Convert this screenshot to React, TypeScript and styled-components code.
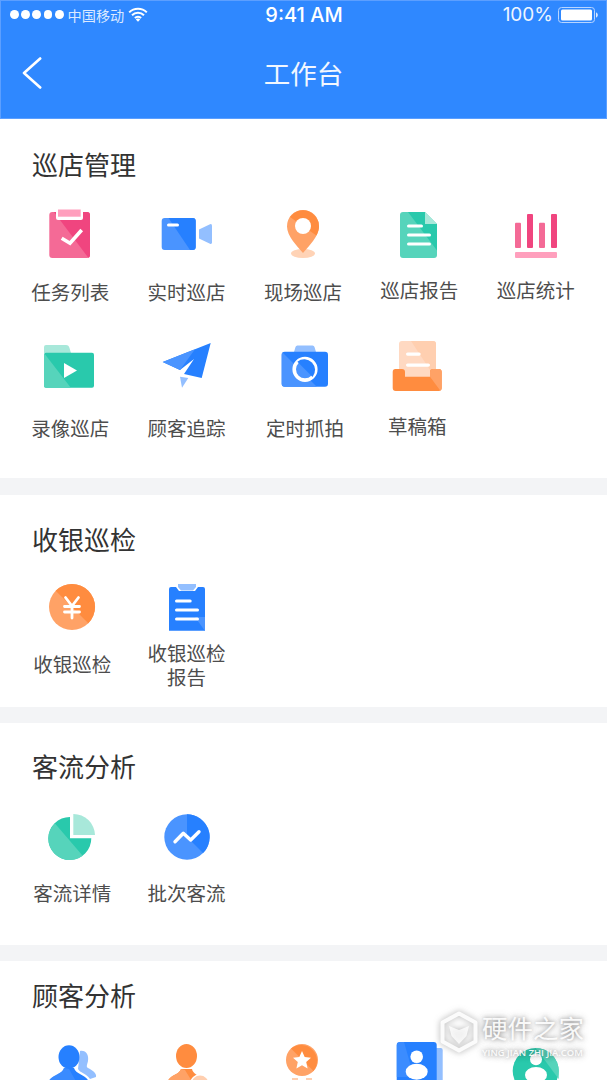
import React from "react";
import styled, { createGlobalStyle } from "styled-components";

const pink = { dark: "#f0457f", mid: "#f46a96", soft: "#ff9fbd" };
const blue = { dark: "#2680ff", mid: "#4a94ff", soft: "#93bfff" };
const green = { dark: "#29c9ac", mid: "#56d4bb", soft: "#a8e8da" };
const orange = { dark: "#ff8c3f", mid: "#ffa266", soft: "#ffcfb0" };

const GlobalStyle = createGlobalStyle`
  html, body {
    margin: 0;
    padding: 0;
    background: #f3f4f6;
  }
  body {
    font-family: "Noto Sans CJK SC", "Noto Sans", sans-serif;
  }
`;

const Screen = styled.div`
  position: relative;
  width: 607px;
  height: 1080px;
  overflow: hidden;
  display: flex;
  flex-direction: column;
  background: #f3f4f6;
`;

const Header = styled.header`
  flex: none;
  height: 119px;
  background: #2f88ff;
  box-shadow: inset 0 0 0 1px #5c9fff;
  color: #fff;
`;

const StatusBar = styled.div`
  height: 29px;
  padding: 0 9px 0 10px;
  display: grid;
  grid-template-columns: 1fr auto 1fr;
  align-items: center;
`;

const StatusLeft = styled.div`
  display: flex;
  align-items: center;
`;

const Dots = styled.div`
  display: flex;
  gap: 2.4px;
  margin-right: 4px;
`;

const Dot = styled.span`
  width: 8.8px;
  height: 8.8px;
  border-radius: 50%;
  background: #fff;
`;

const Carrier = styled.span`
  font-size: 14.2px;
  line-height: 18px;
  color: #dbe9ff;
  margin-right: 4px;
`;

const Clock = styled.span`
  font-family: Inter, "Liberation Sans", sans-serif;
  font-size: 20px;
  font-weight: 500;
  line-height: 24px;
`;

const StatusRight = styled.div`
  display: flex;
  justify-content: flex-end;
  align-items: center;
  gap: 5px;
`;

const Percent = styled.span`
  font-family: Inter, "Liberation Sans", sans-serif;
  font-size: 19px;
  line-height: 24px;
  color: #eef5ff;
`;

const NavBar = styled.div`
  height: 88px;
  padding-bottom: 2px;
  display: grid;
  grid-template-columns: 1fr auto 1fr;
  align-items: center;
`;

const BackButton = styled.div`
  display: flex;
  padding-left: 22px;
`;

const PageTitle = styled.h1`
  margin: 0;
  font-size: 26.5px;
  font-weight: 400;
  line-height: 36px;
  color: #f2f7ff;
`;

const Panels = styled.main`
  display: flex;
  flex-direction: column;
  gap: 16px;
`;

const Panel = styled.section<{ $top: number; $gap: number; $bottom: number }>`
  background: #fff;
  padding: ${(p) => p.$top}px 0 ${(p) => p.$bottom}px;

  &:first-child {
    margin-bottom: 1px;
  }

  h2 {
    margin: 0 0 ${(p) => p.$gap}px 32px;
    font-size: 26px;
    font-weight: 400;
    line-height: 36px;
    color: #333;
  }
`;

const Grid = styled.div<{ $row: number }>`
  padding-left: 12px;
  display: grid;
  grid-template-columns: repeat(5, 116.4px);
  grid-auto-rows: ${(p) => p.$row}px;
`;

const Item = styled.div<{ $dx: number }>`
  display: flex;
  flex-direction: column;
  align-items: center;
  margin-left: ${(p) => p.$dx}px;
  margin-right: ${(p) => -p.$dx}px;
`;

const Glyph = styled.svg`
  flex: none;
  display: block;
  width: 60px;
  height: 60px;
`;

const Label = styled.div<{ $drop: number }>`
  margin-top: ${(p) => p.$drop}px;
  max-width: 80px;
  text-align: center;
  font-size: 19.5px;
  line-height: 24px;
  color: #4d4d4d;
`;

const Watermark = styled.div`
  position: absolute;
  left: 440px;
  top: 1011px;
  display: flex;
  gap: 4px;
  color: rgba(255, 255, 255, 0.92);
  text-shadow: 0 0 4px rgba(70, 70, 70, 0.55), 0 0 8px rgba(70, 70, 70, 0.3);
  pointer-events: none;

  svg {
    filter: drop-shadow(0 0 3px rgba(70, 70, 70, 0.5));
  }
`;

const MarkText = styled.div`
  display: flex;
  flex-direction: column;
`;

const MarkName = styled.div`
  font-size: 25.5px;
  line-height: 30px;
  margin-top: 1px;
`;

const MarkSub = styled.div`
  font-family: "Open Sans", "Liberation Sans", sans-serif;
  font-size: 9.4px;
  font-weight: 600;
  line-height: 14px;
  margin-top: 4px;
  white-space: nowrap;
`;

const Wifi = () => (
  <svg width="20" height="15" viewBox="0 0 20 15">
    <path d="M1.200 5.400a12.500 12.500 0 0 1 17.600 0M4 8.300a8.500 8.500 0 0 1 12 0M6.900 11a4.300 4.300 0 0 1 6.200 0" fill="none" stroke="#fff" strokeWidth="2" />
    <path d="M10 14.800 7.800 12.500a3.200 3.200 0 0 1 4.400 0z" fill="#fff" />
  </svg>
);

const Battery = () => (
  <svg width="40" height="16" viewBox="0 0 40 16">
    <rect x="0.500" y="0.500" width="36" height="15" rx="3" fill="none" stroke="#b9d5ff" />
    <rect x="3" y="2.500" width="31" height="11" rx="1.500" fill="#fff" />
    <path d="M38 5.500c1.200.3 1.800 1.300 1.800 2.500s-.6 2.200-1.800 2.500z" fill="#dbe9ff" />
  </svg>
);

const BackIcon = () => (
  <svg width="20" height="34" viewBox="0 0 20 34">
    <path d="M18.200 2.500 2 17l16.200 14.500" fill="none" stroke="#fff" strokeWidth="2.600" strokeLinecap="round" strokeLinejoin="round" />
  </svg>
);

const TaskIcon = () => (
  <Glyph viewBox="0 0 60 60">
    <clipPath id="task">
      <rect x="9.300" y="7" width="40.700" height="46" rx="3" />
    </clipPath>
    <g clipPath="url(#task)">
      <rect x="9" y="7" width="41" height="46" fill={pink.mid} />
      <polygon points="14,7 50,7 50,53 48.500,53" fill={pink.dark} />
    </g>
    <rect x="16" y="3" width="27" height="12" rx="2" fill="#fff" />
    <rect x="18" y="4.500" width="22.700" height="7.200" fill={pink.soft} />
    <path d="M21.700 33.300 30 38.300 41.700 25" fill="none" stroke="#fff" strokeWidth="3.600" />
  </Glyph>
);

const VideoIcon = () => (
  <Glyph viewBox="0 0 60 60">
    <clipPath id="video">
      <rect x="4.700" y="13" width="34" height="32" rx="3" />
    </clipPath>
    <g clipPath="url(#video)">
      <rect x="4" y="13" width="35" height="32" fill={blue.mid} />
      <polygon points="11.500,13 39,13 39,45 33,45" fill={blue.dark} />
    </g>
    <rect x="10" y="18.500" width="12" height="3" rx="1.500" fill="#fff" />
    <path d="M42 24.500 53 19.300a1.500 1.500 0 0 1 2 1.400v16.600a1.500 1.500 0 0 1-2 1.400L42 33.500z" fill={blue.soft} />
  </Glyph>
);

const PinIcon = () => (
  <Glyph viewBox="0 0 60 60">
    <ellipse cx="30" cy="48.500" rx="12" ry="4.500" fill="#ffd3b6" />
    <path d="M30 5a16 16 0 0 1 16 16.500C46 31 36 41 30 48 24 41 14 31 14 21.500A16 16 0 0 1 30 5z" fill={orange.mid} />
    <path d="M17 12A16 16 0 0 1 46 21.500C46 24.500 45 27.500 43.400 30.600z" fill={orange.dark} />
    <circle cx="30" cy="21" r="8" fill="#fff" />
  </Glyph>
);

const ReportIcon = () => (
  <Glyph viewBox="0 0 60 60">
    <path d="M14 7h22l12 12v31a3 3 0 0 1-3 3H14a3 3 0 0 1-3-3V10a3 3 0 0 1 3-3z" fill={green.mid} />
    <path d="M19 7h17v12h12v26.500z" fill={green.dark} />
    <path d="M36 7l12 12H36z" fill={green.soft} />
    <rect x="18" y="19.500" width="16" height="3" rx="1.500" fill="#fff" />
    <rect x="18" y="28.500" width="24" height="3" rx="1.500" fill="#fff" />
    <rect x="18" y="37.500" width="24" height="3" rx="1.500" fill="#fff" />
  </Glyph>
);

const StatsIcon = () => (
  <Glyph viewBox="0 0 60 60">
    <rect x="9" y="17.700" width="6" height="25.300" rx="1" fill={pink.mid} />
    <rect x="21" y="9" width="6" height="34" rx="1" fill={pink.dark} />
    <rect x="33" y="17.700" width="6" height="25.300" rx="1" fill={pink.mid} />
    <rect x="45" y="9" width="6" height="34" rx="1" fill={pink.dark} />
    <rect x="9" y="47" width="42" height="6" rx="1" fill={pink.soft} />
  </Glyph>
);

const RecordIcon = () => (
  <Glyph viewBox="0 0 60 60">
    <path d="M6 8h20c2 0 3 1 3.500 3l1.500 5H4v-6a2 2 0 0 1 2-2z" fill={green.soft} />
    <clipPath id="record">
      <rect x="4" y="15.700" width="50" height="35" rx="2" />
    </clipPath>
    <g clipPath="url(#record)">
      <rect x="4" y="15" width="50" height="36" fill={green.dark} />
      <polygon points="4,16 4,51 31,51" fill={green.mid} />
    </g>
    <polygon points="24,26 37,33.500 24,41" fill="#fff" />
  </Glyph>
);

const PlaneIcon = () => (
  <Glyph viewBox="0 0 60 60">
    <polygon points="53.700,6 5.700,25 23,33 37,22 27,37 44.700,41" fill={blue.dark} />
    <polygon points="5.700,25 38,12.300 23,33" fill={blue.mid} />
    <polygon points="23,39.700 31.300,41 25,50.700" fill={blue.soft} />
  </Glyph>
);

const CameraIcon = () => (
  <Glyph viewBox="0 0 60 60">
    <path d="M19 15l1.500-5a2 2 0 0 1 2-1.500h15a2 2 0 0 1 2 1.500l1.500 5z" fill={blue.soft} />
    <clipPath id="camera">
      <rect x="6.700" y="14.700" width="46.300" height="35" rx="3" />
    </clipPath>
    <g clipPath="url(#camera)">
      <rect x="6" y="14" width="48" height="36" fill={blue.dark} />
      <polygon points="6,14 6,50 42,50" fill={blue.mid} />
    </g>
    <circle cx="30" cy="32.300" r="10.800" fill={blue.mid} stroke="#fff" strokeWidth="3.600" />
    <path d="M22.400 24.700A10.800 10.800 0 0 1 37.600 39.900z" fill={blue.dark} />
  </Glyph>
);

const DraftIcon = () => (
  <Glyph viewBox="0 0 60 60">
    <rect x="12" y="4" width="37" height="38" rx="3" fill="#ffd9c2" />
    <path d="M24 4h22a3 3 0 0 1 3 3v35z" fill={orange.soft} />
    <rect x="19" y="15.500" width="14.700" height="3.200" rx="1.600" fill="#fff" />
    <rect x="19" y="26.500" width="24" height="3.200" rx="1.600" fill="#fff" />
    <path d="M9 32h6a3 3 0 0 1 3 3v4.700h25V35a3 3 0 0 1 3-3h5.700a3 3 0 0 1 3 3v16a3 3 0 0 1-3 3H8.700a3 3 0 0 1-3-3V35a3 3 0 0 1 3.300-3z" fill={orange.dark} />
    <path d="M43 39.700V35a3 3 0 0 1 3-3h5.700a3 3 0 0 1 3 3v16a3 3 0 0 1-1.500 2.600z" fill={orange.mid} />
  </Glyph>
);

const CashIcon = () => (
  <Glyph viewBox="0 0 60 60">
    <circle cx="30" cy="30" r="23" fill={orange.mid} />
    <path d="M13.700 13.700A23 23 0 0 1 46.300 46.300z" fill={orange.dark} />
    <path d="M23.500 20.500 30 29l6.500-8.500M22.500 29.500h15M22.500 35h15M30 29v12" fill="none" stroke="#fff" strokeWidth="2.800" strokeLinecap="round" />
  </Glyph>
);

const ClipReportIcon = () => (
  <Glyph viewBox="0 0 60 60">
    <clipPath id="clip-report">
      <path d="M14 10h5l3 4h16l3-4h5a2 2 0 0 1 2 2v41.700H12V12a2 2 0 0 1 2-2z" />
    </clipPath>
    <g clipPath="url(#clip-report)">
      <rect x="12" y="9" width="36" height="45" fill={blue.dark} />
      <polygon points="38,40 48,40 48,54" fill={blue.mid} />
    </g>
    <path d="M21 7h18v3l-3 3.500H24L21 10z" fill={blue.soft} />
    <rect x="18" y="22.500" width="16.700" height="3" rx="1.500" fill="#fff" />
    <rect x="18" y="31.500" width="24" height="3" rx="1.500" fill="#fff" />
    <rect x="18" y="40.500" width="24" height="3" rx="1.500" fill="#fff" />
  </Glyph>
);

const PieIcon = () => (
  <Glyph viewBox="0 0 60 60">
    <path d="M28 10v21.300h21.300A21.500 21.500 0 1 1 28 10z" fill={green.dark} />
    <path d="M12.800 16.200 40.700 48.800A21.500 21.500 0 0 1 12.800 16.200z" fill={green.mid} />
    <path d="M31.300 7a21.500 21.500 0 0 1 21.700 21H31.300z" fill={green.soft} />
  </Glyph>
);

const WaveIcon = () => (
  <Glyph viewBox="0 0 60 60">
    <circle cx="30" cy="30" r="22.700" fill={blue.mid} />
    <path d="M30 30 30 7.300A22.700 22.700 0 0 1 46 46z" fill={blue.dark} />
    <path d="M18 34.700 26.300 26.300 33.700 33 42 24.700" fill="none" stroke="#fff" strokeWidth="3.400" strokeLinecap="round" strokeLinejoin="round" />
  </Glyph>
);

const CrowdIcon = () => (
  <Glyph viewBox="0 0 60 60">
    <path d="M38 14c6-1 9 4 8 10-1 4-2 6 0 7 4 2 9 5 8 9l-6 2c-4-6-10-6-12-10z" fill={blue.soft} />
    <ellipse cx="27" cy="20" rx="10.500" ry="11.800" fill={blue.dark} />
    <path d="M6 46c2-8 14-8 16-15h10c2 7 14 7 15 15z" fill={blue.dark} />
    <path d="M6 46c2-8 14-8 16-15l5 1 8 14z" fill={blue.mid} opacity="0.55" />
  </Glyph>
);

const MemberIcon = () => (
  <Glyph viewBox="0 0 60 60">
    <ellipse cx="29.500" cy="19" rx="10.500" ry="12" fill={orange.dark} />
    <path d="M10 46c2-8 12-8 14-14h11c1 5 6 6 10 9v5z" fill={orange.dark} />
    <path d="M10 46c2-8 12-8 14-14l4 1 8 13z" fill={orange.mid} />
    <circle cx="43" cy="47" r="10" fill="#fff" />
    <circle cx="43" cy="47" r="8.500" fill={orange.soft} />
  </Glyph>
);

const StarIcon = () => (
  <Glyph viewBox="0 0 60 60">
    <rect x="19" y="41" width="6" height="3" fill={orange.soft} />
    <rect x="33" y="41" width="6" height="3" fill={orange.soft} />
    <circle cx="29" cy="23" r="16" fill={orange.mid} />
    <path d="M18 11.500A16 16 0 0 1 40.500 34z" fill={orange.dark} />
    <polygon points="29,14 31.700,20 38,20.700 33.200,25 34.600,31.500 29,28.200 23.400,31.500 24.800,25 20,20.700 26.300,20" fill="#fff" />
  </Glyph>
);

const CardIcon = () => (
  <Glyph viewBox="0 0 60 60">
    <rect x="40" y="11" width="13.700" height="49" rx="2" fill={blue.soft} />
    <rect x="7.700" y="5" width="40" height="55" rx="3" fill={blue.dark} />
    <polygon points="7.700,8 7.700,40 25,40 15,5 10,5" fill={blue.mid} opacity="0.6" />
    <circle cx="27.700" cy="19.700" r="6.300" fill="#fff" />
    <ellipse cx="27.700" cy="34.700" rx="11" ry="8" fill="#fff" />
  </Glyph>
);

const ProfileIcon = () => (
  <Glyph viewBox="0 0 60 60">
    <circle cx="29.700" cy="34" r="23" fill={green.dark} />
    <path d="M29.700 11A23 23 0 0 1 52.700 34v8z" fill={green.mid} />
    <circle cx="30" cy="22.300" r="6" fill="#fff" />
    <ellipse cx="30" cy="38" rx="11" ry="8" fill="#fff" />
  </Glyph>
);

const MarkLogo = () => (
  <svg width="38" height="42" viewBox="0 0 38 42">
    <path d="M19 2.500 35.500 11.500V30.500L19 39.500 2.500 30.500V11.500z" fill="none" stroke="rgba(255,255,255,.9)" strokeWidth="4" strokeLinejoin="round" />
    <path d="M9 15 19 19 29 15 26.500 25 19 33 11.500 25z" fill="rgba(255,255,255,.8)" />
  </svg>
);

type Entry = {
  name?: string;
  Icon: React.FC;
  drop?: number;
  dx?: number;
};

const patrol: Entry[] = [
  { name: "任务列表", Icon: TaskIcon, drop: 15 },
  { name: "实时巡店", Icon: VideoIcon, drop: 15 },
  { name: "现场巡店", Icon: PinIcon, drop: 15 },
  { name: "巡店报告", Icon: ReportIcon, drop: 13 },
  { name: "巡店统计", Icon: StatsIcon, drop: 13 },
  { name: "录像巡店", Icon: RecordIcon, drop: 19 },
  { name: "顾客追踪", Icon: PlaneIcon, drop: 19 },
  { name: "定时抓拍", Icon: CameraIcon, drop: 19, dx: 2 },
  { name: "草稿箱", Icon: DraftIcon, drop: 17, dx: -2 },
];

const cashier: Entry[] = [
  { name: "收银巡检", Icon: CashIcon, drop: 15, dx: 2 },
  { name: "收银巡检报告", Icon: ClipReportIcon, drop: 4 },
];

const traffic: Entry[] = [
  { name: "客流详情", Icon: PieIcon, drop: 14, dx: 2 },
  { name: "批次客流", Icon: WaveIcon, drop: 14 },
];

// the row is cut by the bottom of the screen, only the icons show
const customers: Entry[] = [
  { Icon: CrowdIcon, dx: 2 },
  { Icon: MemberIcon },
  { Icon: StarIcon },
  { Icon: CardIcon },
  { Icon: ProfileIcon },
];

const Items = ({ list, row }: { list: Entry[]; row: number }) => (
  <Grid $row={row}>
    {list.map(({ name, Icon, drop, dx }, i) => (
      <Item key={i} $dx={dx ?? 0}>
        <Icon />
        {name && <Label $drop={drop ?? 0}>{name}</Label>}
      </Item>
    ))}
  </Grid>
);

export default function App() {
  return (
    <Screen>
      <GlobalStyle />
      <Header>
        <StatusBar>
          <StatusLeft>
            <Dots>
              {[0, 1, 2, 3, 4].map((i) => (
                <Dot key={i} />
              ))}
            </Dots>
            <Carrier>中国移动</Carrier>
            <Wifi />
          </StatusLeft>
          <Clock>9:41 AM</Clock>
          <StatusRight>
            <Percent>100%</Percent>
            <Battery />
          </StatusRight>
        </StatusBar>
        <NavBar>
          <BackButton>
            <BackIcon />
          </BackButton>
          <PageTitle>工作台</PageTitle>
        </NavBar>
      </Header>
      <Panels>
        <Panel $top={27} $gap={23} $bottom={9}>
          <h2>巡店管理</h2>
          <Items list={patrol} row={132} />
        </Panel>
        <Panel $top={26} $gap={20} $bottom={0}>
          <h2>收银巡检</h2>
          <Items list={cashier} row={130} />
        </Panel>
        <Panel $top={25} $gap={23} $bottom={0}>
          <h2>客流分析</h2>
          <Items list={traffic} row={138} />
        </Panel>
        <Panel $top={16} $gap={24} $bottom={0}>
          <h2>顾客分析</h2>
          <Items list={customers} row={132} />
        </Panel>
      </Panels>
      <Watermark>
        <MarkLogo />
        <MarkText>
          <MarkName>硬件之家</MarkName>
          <MarkSub>YING JIAN ZHI JIA.COM</MarkSub>
        </MarkText>
      </Watermark>
    </Screen>
  );
}
